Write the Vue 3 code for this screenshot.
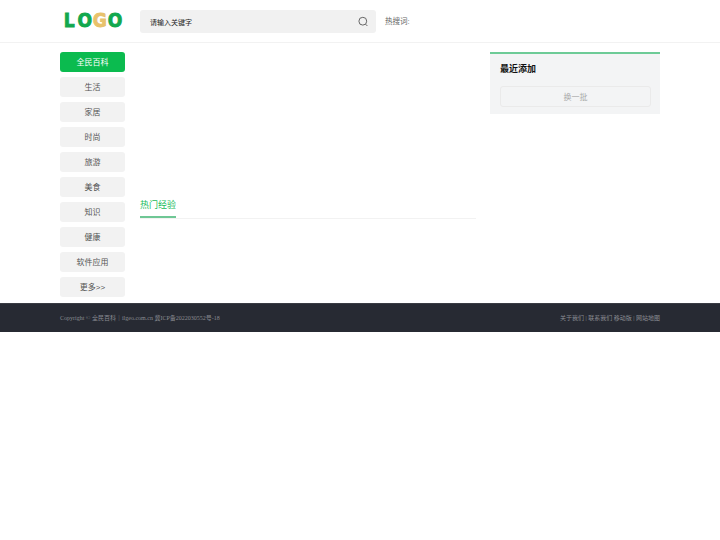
<script setup>
const nav = ['全民百科', '生活', '家居', '时尚', '旅游', '美食', '知识', '健康', '软件应用', '更多>>']
</script>

<template>
  <div class="page">
    <header class="header">
      <div class="wrap head-row">
        <a class="logo">
          <svg width="70" height="24" viewBox="0 0 70 24">
            <g transform="scale(0.86 1)">
              <text class="lg" x="1" y="19" fill="#12a84e" stroke="#12a84e">L</text>
              <text class="lg" x="17" y="19" fill="#12a84e" stroke="#12a84e">O</text>
              <text class="lg" x="34.5" y="19" fill="#e8c26c" stroke="#e8c26c">G</text>
              <text class="lg" x="52" y="19" fill="#12a84e" stroke="#12a84e">O</text>
            </g>
          </svg>
        </a>
        <div class="search">
          <span class="ph">请输入关键字</span>
          <svg width="12" height="12" viewBox="0 0 12 12" fill="none" stroke="#666" stroke-width="1">
            <circle cx="5.8" cy="5.2" r="3.9" />
            <path d="M8.6 8.2 10.4 10" />
          </svg>
        </div>
        <span class="hot">热搜词:</span>
      </div>
    </header>
    <div class="wrap body-row">
      <nav class="side">
        <a v-for="(n, i) in nav" :key="n" class="side-item" :class="{ on: i === 0 }">{{ n }}</a>
      </nav>
      <main class="main">
        <div class="tabs"><span class="tab">热门经验</span></div>
      </main>
      <aside class="aside">
        <h3>最近添加</h3>
        <button class="more">换一批</button>
      </aside>
    </div>
    <footer class="footer">
      <div class="wrap foot-row">
        <span>Copyright © 全民百科｜ilgeo.com.cn 冀ICP备2022030552号-18</span>
        <span>关于我们 | 联系我们 移动版 | 网站地图</span>
      </div>
    </footer>
  </div>
</template>

<style>
body { margin: 0; background: #fff; }
</style>

<style scoped>
.page { font-family: "Liberation Sans", "Noto Sans CJK SC", sans-serif; color: #333; }
.wrap { width: 600px; margin: 0 auto; }
.header { height: 43px; border-bottom: 1px solid #f2f2f2; box-sizing: border-box; }
.head-row { display: flex; align-items: flex-start; height: 42px; }
.logo { width: 80px; padding: 8px 0 0 3px; box-sizing: border-box; }
.logo svg { display: block; }
.lg { font: 700 20px "DejaVu Sans", sans-serif; stroke-width: 0.9px; }
.search { margin-top: 10px; width: 236px; height: 23px; border-radius: 3px; background: #f1f1f1; display: flex; align-items: center; justify-content: space-between; padding: 0 7px 0 10px; box-sizing: border-box; }
.ph { font-size: 7px; color: #222; }
.hot { font-size: 7.5px; color: #666; margin: 17px 0 0 9px; line-height: 10px; }
.body-row { display: flex; align-items: flex-start; height: 260px; }
.side { width: 65px; padding-top: 9px; display: flex; flex-direction: column; gap: 5px; }
.side-item { height: 20px; line-height: 21px; border-radius: 3px; background: #f2f2f2; text-align: center; font-size: 8px; color: #555; }
.side-item.on { background: #0bbb4f; color: #fff; }
.main { width: 336px; margin-left: 15px; padding-top: 152px; }
.tabs { border-bottom: 1px solid #f2f2f2; height: 23px; }
.tab { display: block; width: 36px; height: 21px; line-height: 20px; font-size: 9px; color: #18bc5a; border-bottom: 2px solid #6fc795; }
.aside { width: 170px; margin: 9px 0 0 14px; height: 62px; background: #f3f4f5; border-top: 2px solid #6dcb97; box-sizing: border-box; padding: 0 9px 0 10px; }
.aside h3 { margin: 0; font-size: 9px; font-weight: 700; color: #111; line-height: 12px; padding-top: 9px; height: 12px; }
.more { display: block; width: 151px; height: 21px; margin-top: 11px; padding: 0; border: 1px solid #eaeaea; border-radius: 3px; background: #f3f4f5; font: 8px "Liberation Sans", "Noto Sans CJK SC", sans-serif; color: #aaa; }
.footer { height: 29px; background: #272a33; border-top: 1px solid #3a3c44; box-sizing: border-box; }
.foot-row { display: flex; justify-content: space-between; font: 6px/28px "Liberation Serif", "Noto Sans CJK SC", serif; color: #8a8c92; }
</style>
